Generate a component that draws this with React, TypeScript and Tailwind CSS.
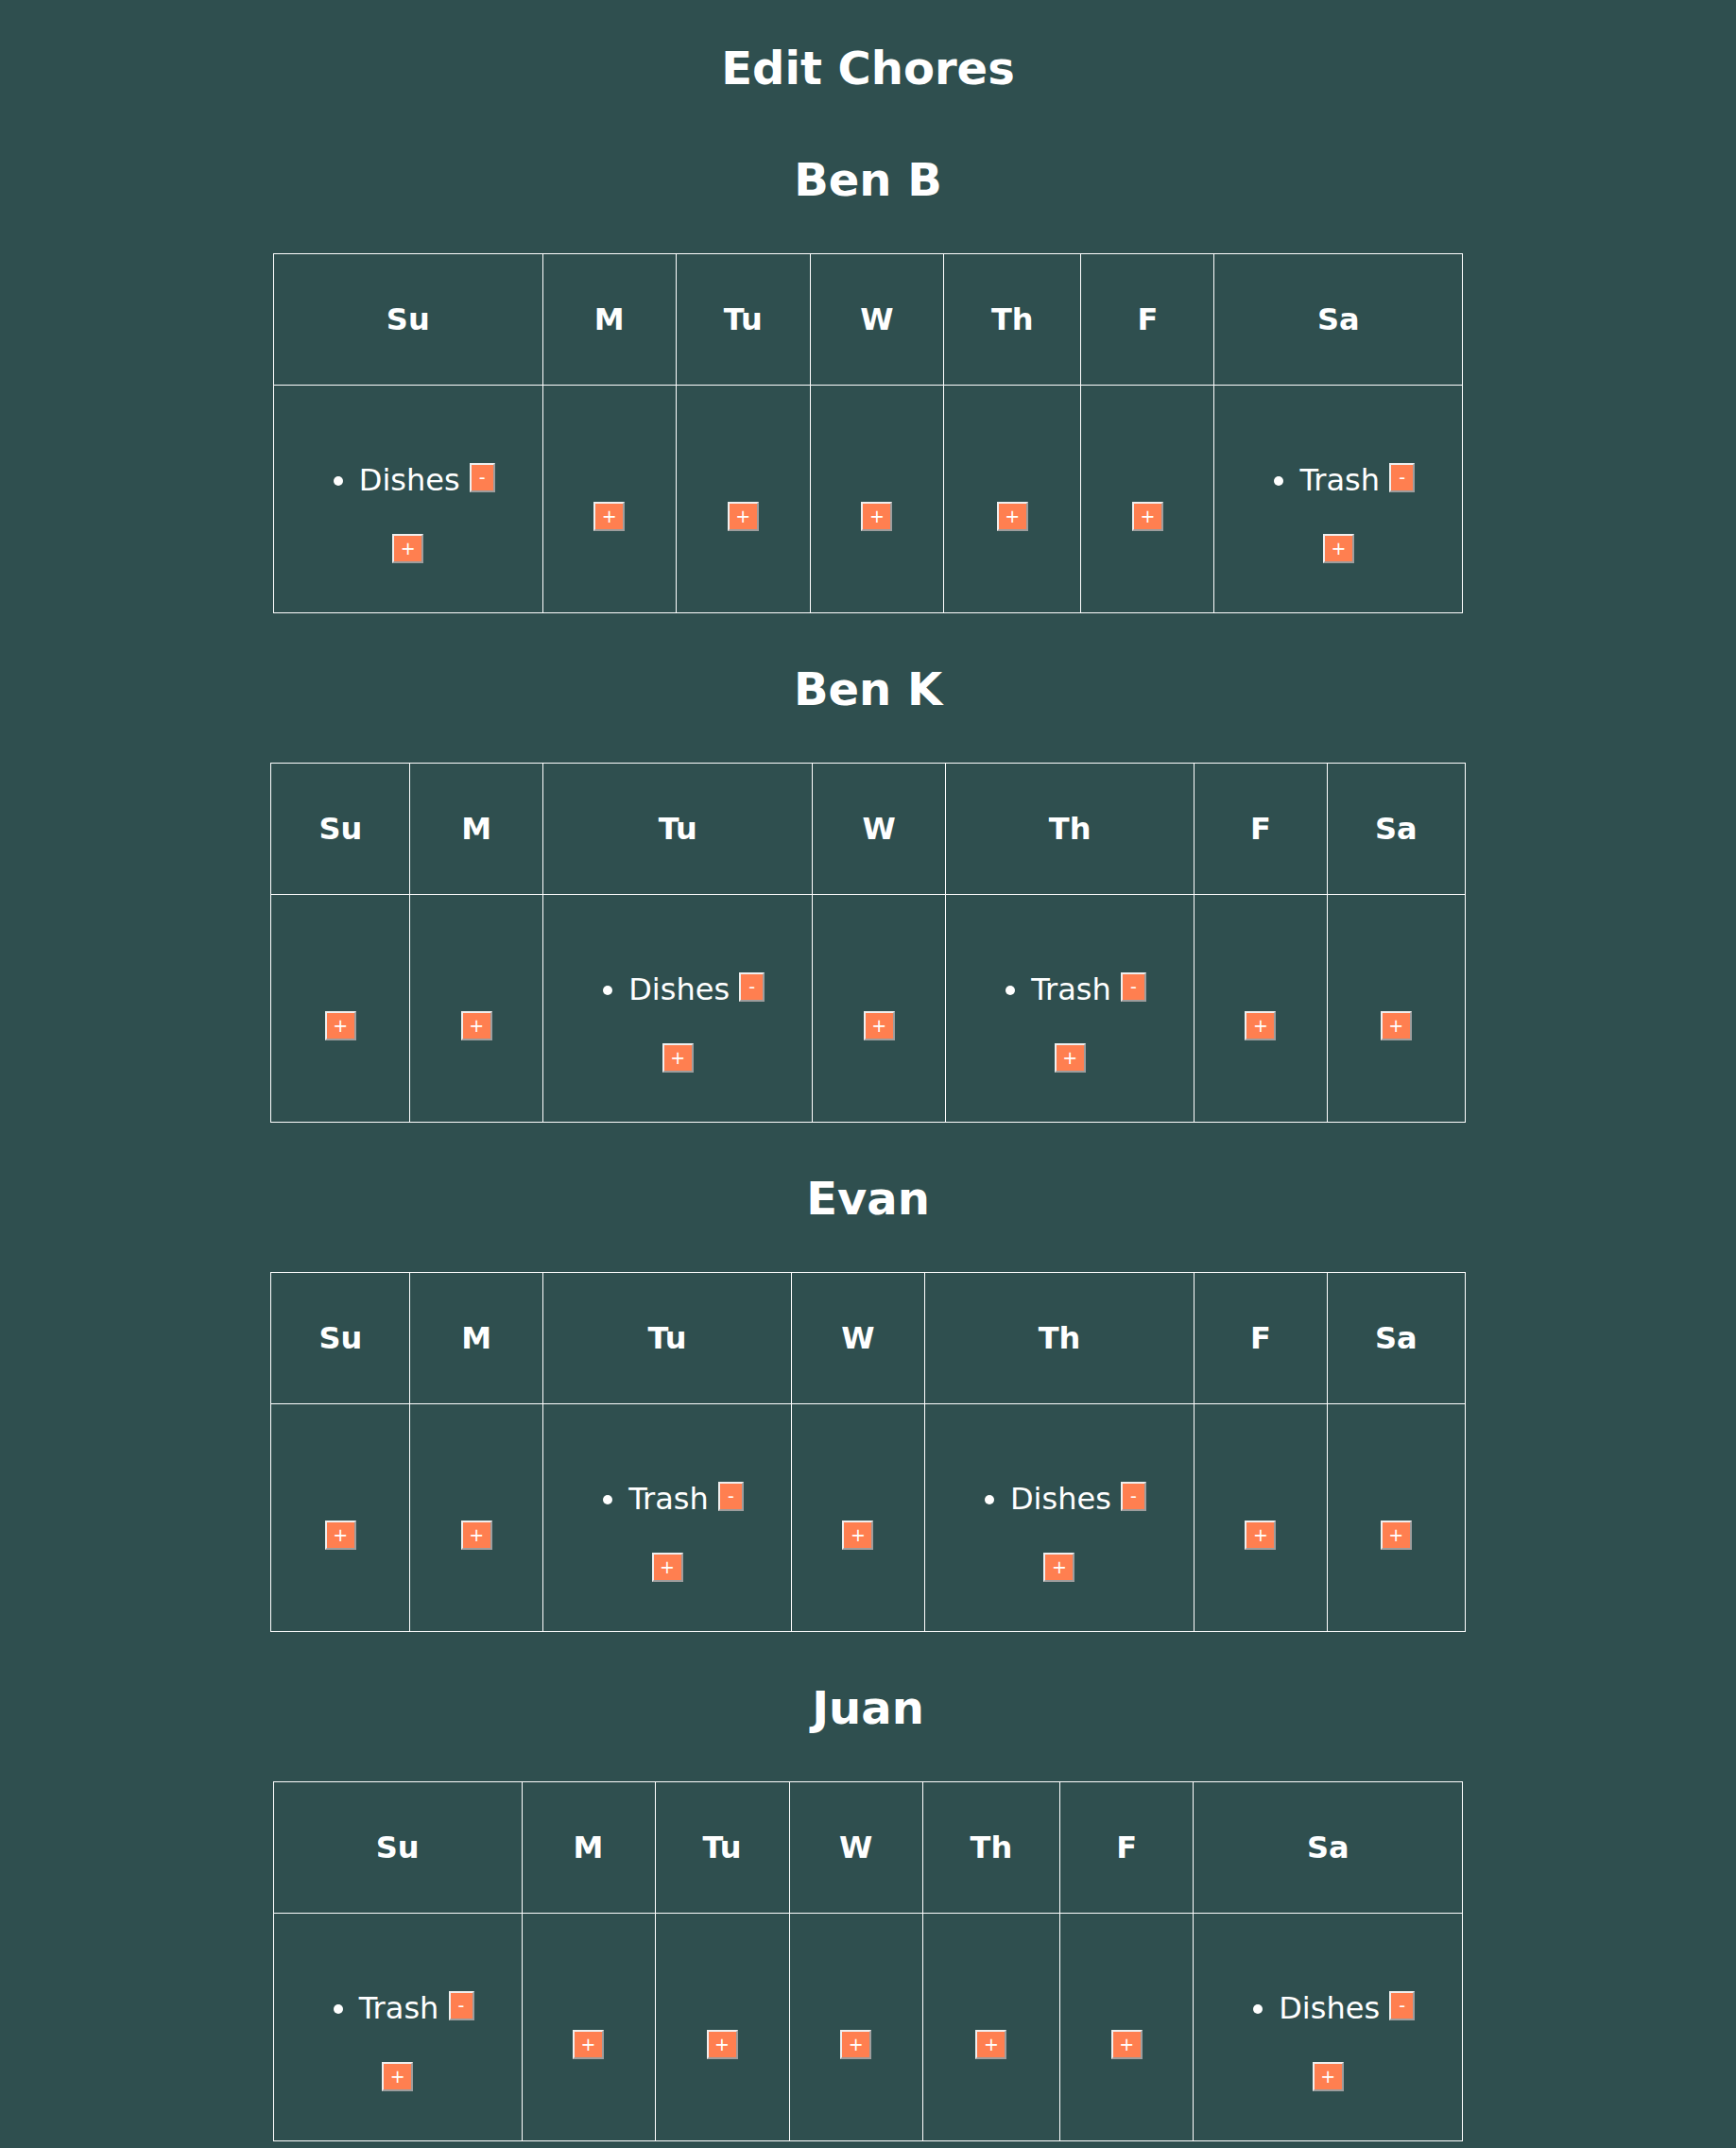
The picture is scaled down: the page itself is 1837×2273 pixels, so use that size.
import React from "react";

const DAYS = ["Su", "M", "Tu", "W", "Th", "F", "Sa"];

type Person = { name: string; chores: Record<string, string[]> };

const PEOPLE: Person[] = [
  { name: "Ben B", chores: { Su: ["Dishes"], Sa: ["Trash"] } },
  { name: "Ben K", chores: { Tu: ["Dishes"], Th: ["Trash"] } },
  { name: "Evan", chores: { Tu: ["Trash"], Th: ["Dishes"] } },
  { name: "Juan", chores: { Su: ["Trash"], Sa: ["Dishes"] } },
];

function PlusBtn() {
  return (
    <button className="flex items-center justify-center w-[33px] h-[31px] bg-[#FF7F50] text-white text-[19px] leading-none border-2 border-t-[#efefef] border-l-[#efefef] border-r-[#9d9d9d] border-b-[#9d9d9d] font-['DejaVu_Sans',sans-serif]">
      +
    </button>
  );
}

function MinusBtn() {
  return (
    <button className="inline-flex items-center justify-center align-top w-[27px] h-[31px] bg-[#FF7F50] text-white text-[19px] leading-none border-2 border-t-[#efefef] border-l-[#efefef] border-r-[#9d9d9d] border-b-[#9d9d9d] font-['DejaVu_Sans',sans-serif]">
      -
    </button>
  );
}

function DayCell({ chores }: { chores: string[] }) {
  return (
    <td className="border border-white p-[50px] align-middle text-center">
      {chores.length > 0 ? (
        <ul className="list-disc pl-[40px] my-[32px]">
          {chores.map((c) => (
            <li key={c} className="leading-[37px] text-[32px]">
              {c} <MinusBtn />
            </li>
          ))}
        </ul>
      ) : (
        <div className="h-[32px] min-w-[40px]" />
      )}
      <div className="h-[39px] pt-[6px] flex justify-center items-start">
        <PlusBtn />
      </div>
    </td>
  );
}

function PersonTable({ person, first }: { person: Person; first: boolean }) {
  return (
    <section className={first ? "mt-[62px]" : "mt-[52px]"}>
      <h2 className="text-center text-[48px] font-bold leading-[56px]">{person.name}</h2>
      <table className="mx-auto mt-[50px] border-collapse border border-white">
        <thead>
          <tr>
            {DAYS.map((d) => (
              <th key={d} className="border border-white p-[50px] text-center font-bold text-[32px] leading-[38px]">
                {d}
              </th>
            ))}
          </tr>
        </thead>
        <tbody>
          <tr>
            {DAYS.map((d) => (
              <DayCell key={d} chores={person.chores[d] ?? []} />
            ))}
          </tr>
        </tbody>
      </table>
    </section>
  );
}

export default function App() {
  return (
    <div className="min-h-screen bg-[#2F4F4F] text-white font-['DejaVu_Sans',sans-serif] text-[32px] pt-[44px] pb-[10px]">
      <h1 className="text-center text-[48px] font-bold leading-[56px]">Edit Chores</h1>
      {PEOPLE.map((p, i) => (
        <PersonTable key={p.name} person={p} first={i === 0} />
      ))}
    </div>
  );
}
